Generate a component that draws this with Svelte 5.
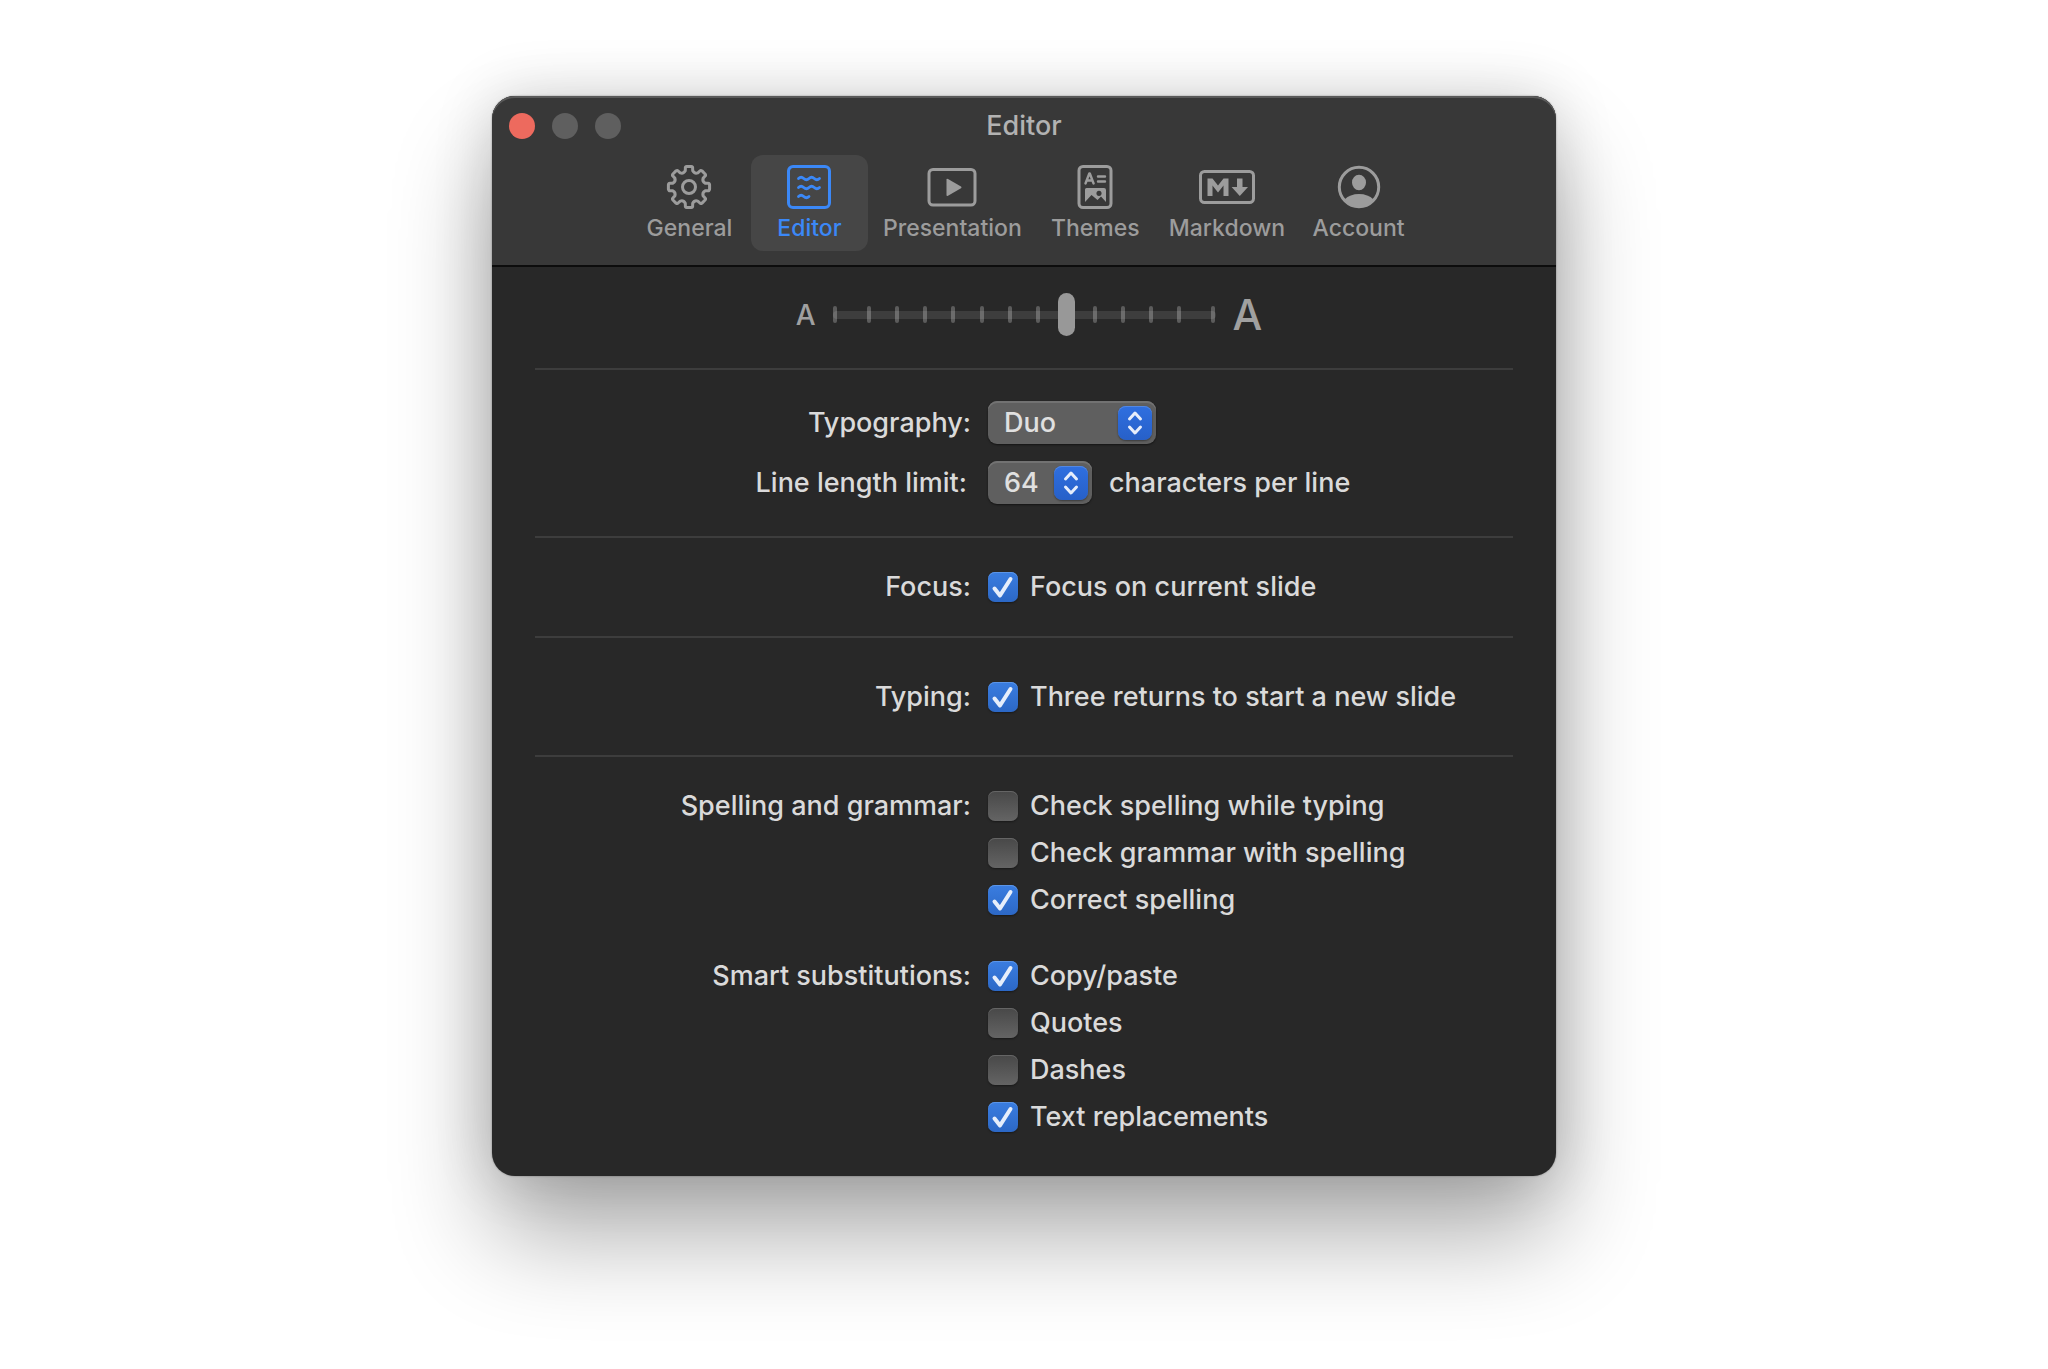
<script>
  let size = $state(8);
  let active = $state('Editor');
  const tabs = ['General', 'Editor', 'Presentation', 'Themes', 'Markdown', 'Account'];
  const ticks = Array.from({ length: 14 }, (_, i) => i);
  const groups = $state([
    { name: 'Focus:', kind: 'focus', rule: true, items: [{ label: 'Focus on current slide', on: true }] },
    { name: 'Typing:', kind: 'typing', rule: true, items: [{ label: 'Three returns to start a new slide', on: true }] },
    {
      name: 'Spelling and grammar:', kind: 'spelling', rule: false,
      items: [
        { label: 'Check spelling while typing', on: false },
        { label: 'Check grammar with spelling', on: false },
        { label: 'Correct spelling', on: true }
      ]
    },
    {
      name: 'Smart substitutions:', kind: 'smart', rule: false,
      items: [
        { label: 'Copy/paste', on: true },
        { label: 'Quotes', on: false },
        { label: 'Dashes', on: false },
        { label: 'Text replacements', on: true }
      ]
    }
  ]);

  // Outline of an eight-toothed gear centred on (24, 24).
  const gear = (() => {
    const p = (r, deg) => {
      const a = (deg * Math.PI) / 180;
      return `${(24 + r * Math.sin(a)).toFixed(2)} ${(24 - r * Math.cos(a)).toFixed(2)}`;
    };
    let d = '';
    for (let i = 0; i < 8; i++) {
      const a = i * 45;
      d += `${i ? 'L' : 'M'}${p(19, a - 11)}Q${p(20.8, a - 11)} ${p(20.7, a - 6)}L${p(20.7, a + 6)}`;
      d += `Q${p(20.8, a + 11)} ${p(19, a + 11)}L${p(16.6, a + 13)}Q${p(14.2, a + 22.5)} ${p(16.6, a + 32)}`;
    }
    return d + 'Z';
  })();
</script>

{#snippet chevrons()}
  <span class="stepper">
    <svg viewBox="0 0 34 34" aria-hidden="true">
      <path d="M11.5 13 17 7l5.5 6M11.5 21l5.5 6 5.5-6" />
    </svg>
  </span>
{/snippet}

<main>
  <section class="window" aria-label="Editor preferences">
    <header>
      <div class="titlebar">
        <div class="lights">
          <button class="light close" aria-label="Close"></button>
          <button class="light" aria-label="Minimize"></button>
          <button class="light" aria-label="Zoom"></button>
        </div>
        <h1>Editor</h1>
      </div>
      <nav>
        {#each tabs as tab}
          <button class="tab" class:active={active === tab} onclick={() => (active = tab)}>
            <svg class="icon" viewBox="0 0 56 48" aria-hidden="true">
              {#if tab === 'General'}
                <g transform="translate(4 0)"><path d={gear} /><circle cx="24" cy="24" r="6.5" /></g>
              {:else if tab === 'Editor'}
                <rect x="7.5" y="3.5" width="41" height="41" rx="4.5" />
                <path class="wave" d="M17.5 15.500q2.600-2.400 5.250 0t5.250 0 5.250 0 5.250 0M17.500 24.500q2.600-2.400 5.250 0t5.250 0 5.250 0 5.250 0M17.500 33.500q2.600-2.400 5.250 0t5.250 0" />
              {:else if tab === 'Presentation'}
                <rect x="5" y="6.5" width="46" height="35.5" rx="4" />
                <path class="solid" d="M22.500 16.500v15.500q0 1.500 1.500.700l13-7.500q1.200-.8 0-1.600l-13-7.500q-1.500-.8-1.500.4z" />
              {:else if tab === 'Themes'}
                <rect x="12" y="3.5" width="32" height="41" rx="4" />
                <path class="thin" d="M18.500 20.500l3.800-10h.5l3.800 10M20 17.500h5.500M31 13.500h7M31 18.500h7" />
                <path class="solid" fill-rule="evenodd" d="M19.500 25h17.500q2 0 2 2V39l-5-5.500-3.500 3.500-6-5L18 39V26.500q0-1.500 1.500-1.500zM32 27.800a2.600 2.600 0 1 0 .01 0z" />
              {:else if tab === 'Markdown'}
                <rect x="1.5" y="8.5" width="53" height="31" rx="4" />
                <path class="solid" d="M8.500 33V15.500h5l5.500 7 5.500-7h5V33h-5V22.500L19 29.500l-5.500-7V33zM38 15.500h5.500V24H49l-8.200 9-8.200-9H38z" />
              {:else}
                <circle cx="28" cy="24" r="19.700" />
                <ellipse class="solid" cx="28" cy="19.5" rx="7" ry="7.8" />
                <path class="solid" d="M13.500 36.500Q19 31 28 31t14.500 5.500Q37 44 28 44t-14.500-7.500z" />
              {/if}
            </svg>
            <span>{tab}</span>
          </button>
        {/each}
      </nav>
    </header>

    <form>
      <div class="size-row">
        <span class="small-a" aria-hidden="true">A</span>
        <div class="slider">
          <div class="ticks">
            {#each ticks as t}<i class:hidden={t === size}></i>{/each}
          </div>
          <input type="range" min="0" max="13" bind:value={size} aria-label="Text size" />
        </div>
        <span class="large-a" aria-hidden="true">A</span>
      </div>
      <hr />

      <div class="fields">
        <label class="name" for="typography">Typography:</label>
        <div class="control">
          <div class="popup wide">
            <select id="typography"><option>Duo</option><option>Mono</option><option>Quattro</option></select>
            {@render chevrons()}
          </div>
        </div>
        <label class="name inset" for="limit">Line length limit:</label>
        <div class="control">
          <div class="popup narrow">
            <select id="limit"><option>64</option><option>72</option><option>80</option></select>
            {@render chevrons()}
          </div>
          <span>characters per line</span>
        </div>
      </div>
      <hr />

      {#each groups as group}
        <div class="group {group.kind}" role="group" aria-labelledby="name-{group.kind}">
          <span class="name" id="name-{group.kind}">{group.name}</span>
          <div class="checks">
            {#each group.items as item}
              <label class="check">
                <span class="box">
                  <input type="checkbox" bind:checked={item.on} />
                  <svg viewBox="0 0 30 30" aria-hidden="true"><path d="M6.500 16.500 12 23.500 22.500 7" /></svg>
                </span>
                <span>{item.label}</span>
              </label>
            {/each}
          </div>
        </div>
        {#if group.rule}<hr />{/if}
      {/each}
    </form>
  </section>
</main>

<style>
  :global(body) {
    background: #fff;
  }
  main {
    box-sizing: border-box;
    min-height: 100vh;
    padding: 96px 24px;
    font: 500 27px/32px Inter, "Liberation Sans", sans-serif;
    color: #dadada;
  }
  .window {
    max-width: 1064px;
    margin: 0 auto;
    border-radius: 23px;
    background: #282828;
    box-shadow:
      0 0 2px rgba(0, 0, 0, 0.4),
      0 60px 100px rgba(0, 0, 0, 0.32),
      0 0 60px rgba(0, 0, 0, 0.16);
  }
  header {
    border-radius: 23px 23px 0 0;
    background: #383838;
    border-bottom: 2px solid #0c0c0c;
    box-shadow: inset 0 2px 0 #5a5a5a;
    padding-bottom: 14px;
  }
  .titlebar {
    display: grid;
    grid-template-columns: 1fr auto 1fr;
    align-items: center;
    height: 59px;
    padding: 0 17px;
  }
  .lights {
    display: flex;
    gap: 17px;
  }
  .light {
    width: 26px;
    height: 26px;
    padding: 0;
    border: 0;
    border-radius: 50%;
    background: #5f5f5f;
  }
  .close {
    background: #ed6a5e;
  }
  h1 {
    margin: 0;
    font-size: 27px;
    font-weight: 500;
    color: #b2b2b2;
  }
  nav {
    display: flex;
    justify-content: center;
    gap: 3px;
  }
  .tab {
    display: flex;
    flex-direction: column;
    align-items: center;
    gap: 3px;
    min-width: 117px;
    height: 96px;
    padding: 8px 12px;
    border: 0;
    border-radius: 12px;
    background: none;
    color: #9c9c9c;
    font: 500 23px/28px Inter, "Liberation Sans", sans-serif;
  }
  .tab.active {
    background: #464646;
    color: #3b88f7;
  }
  .icon {
    width: 56px;
    height: 48px;
    fill: none;
    stroke: currentColor;
    stroke-width: 3;
    stroke-linecap: round;
    stroke-linejoin: round;
  }
  .solid {
    fill: currentColor;
    stroke: none;
  }
  .thin {
    stroke-width: 2.4;
  }
  .wave {
    stroke-width: 2.8;
  }
  form {
    padding: 0 43px 43px;
  }
  hr {
    height: 2px;
    margin: 0;
    border: 0;
    background: #3d3d3d;
  }
  .size-row {
    display: flex;
    justify-content: center;
    align-items: center;
    gap: 17px;
    height: 95px;
    padding: 0 0 6px 10px;
    color: #a0a0a0;
  }
  .small-a {
    font-size: 28px;
  }
  .large-a {
    font-size: 42px;
  }
  .slider {
    display: grid;
    width: 383px;
    align-items: center;
  }
  .ticks,
  .slider input {
    grid-area: 1 / 1;
  }
  .ticks {
    display: flex;
    justify-content: space-between;
  }
  .ticks i {
    width: 4px;
    height: 17px;
    border-radius: 2px;
    background: #5c5c5c;
  }
  .ticks i:first-child {
    margin-right: 6px;
  }
  .ticks i:last-child {
    margin-left: 6px;
  }
  .ticks .hidden {
    visibility: hidden;
  }
  .slider input {
    appearance: none;
    width: 100%;
    height: 43px;
    margin: 0;
    background: none;
  }
  .slider input::-webkit-slider-runnable-track {
    height: 8px;
    border-radius: 4px;
    background: rgba(255, 255, 255, 0.1);
  }
  .slider input::-webkit-slider-thumb {
    appearance: none;
    width: 17px;
    height: 43px;
    margin-top: -18px;
    border-radius: 9px;
    background: #989898;
  }
  .fields {
    display: grid;
    grid-template-columns: 436px 1fr;
    column-gap: 17px;
    row-gap: 17px;
    padding: 31px 0 32px;
    align-items: center;
  }
  .name {
    text-align: right;
  }
  .name.inset {
    padding-right: 4px;
  }
  .control {
    display: flex;
    align-items: center;
    gap: 17px;
  }
  .popup {
    display: grid;
    height: 43px;
    border-radius: 9px;
    background: #5f5f5f;
    box-shadow: inset 0 2px 0 #727272, 0 1px 2px rgba(0, 0, 0, 0.5);
    align-items: center;
  }
  .wide {
    width: 168px;
  }
  .narrow {
    width: 104px;
  }
  .popup select,
  .stepper {
    grid-area: 1 / 1;
  }
  .popup select {
    appearance: none;
    height: 43px;
    padding: 0 0 0 16px;
    border: 0;
    background: none;
    color: #e0e0e0;
    font: inherit;
  }
  .stepper {
    justify-self: end;
    width: 34px;
    height: 34px;
    margin-right: 4px;
    border-radius: 8px;
    background: linear-gradient(#2f6fe0, #2760c8);
    box-shadow: inset 0 1px 0 #5288e4, 0 1px 2px rgba(0, 0, 0, 0.4);
    pointer-events: none;
  }
  .stepper svg {
    display: block;
    fill: none;
    stroke: #e6edfb;
    stroke-width: 3;
    stroke-linecap: round;
    stroke-linejoin: round;
  }
  .group {
    display: grid;
    grid-template-columns: 436px 1fr;
    column-gap: 17px;
  }
  .focus {
    padding: 33px 0;
  }
  .typing {
    padding: 43px 0 42px;
  }
  .spelling {
    padding-top: 33px;
  }
  .smart {
    padding-top: 44px;
  }
  .checks {
    display: flex;
    flex-direction: column;
    gap: 15px;
  }
  .check {
    display: flex;
    align-items: center;
    gap: 12px;
  }
  .box {
    display: grid;
    width: 30px;
    height: 30px;
  }
  .box input,
  .box svg {
    grid-area: 1 / 1;
    width: 30px;
    height: 30px;
    margin: 0;
  }
  .box input {
    appearance: none;
    border-radius: 7px;
    background: linear-gradient(#484848, #646464);
    box-shadow: inset 0 1px 0 #656565, 0 1px 2px rgba(0, 0, 0, 0.4);
  }
  .box input:checked {
    background: linear-gradient(#3a7de0, #2c68c6);
    box-shadow: inset 0 1px 0 #5b95e8, 0 1px 2px rgba(0, 0, 0, 0.4);
  }
  .box svg {
    visibility: hidden;
    fill: none;
    stroke: #e6eefb;
    stroke-width: 4;
    stroke-linecap: round;
    stroke-linejoin: round;
    pointer-events: none;
  }
  .box input:checked + svg {
    visibility: visible;
  }
</style>
